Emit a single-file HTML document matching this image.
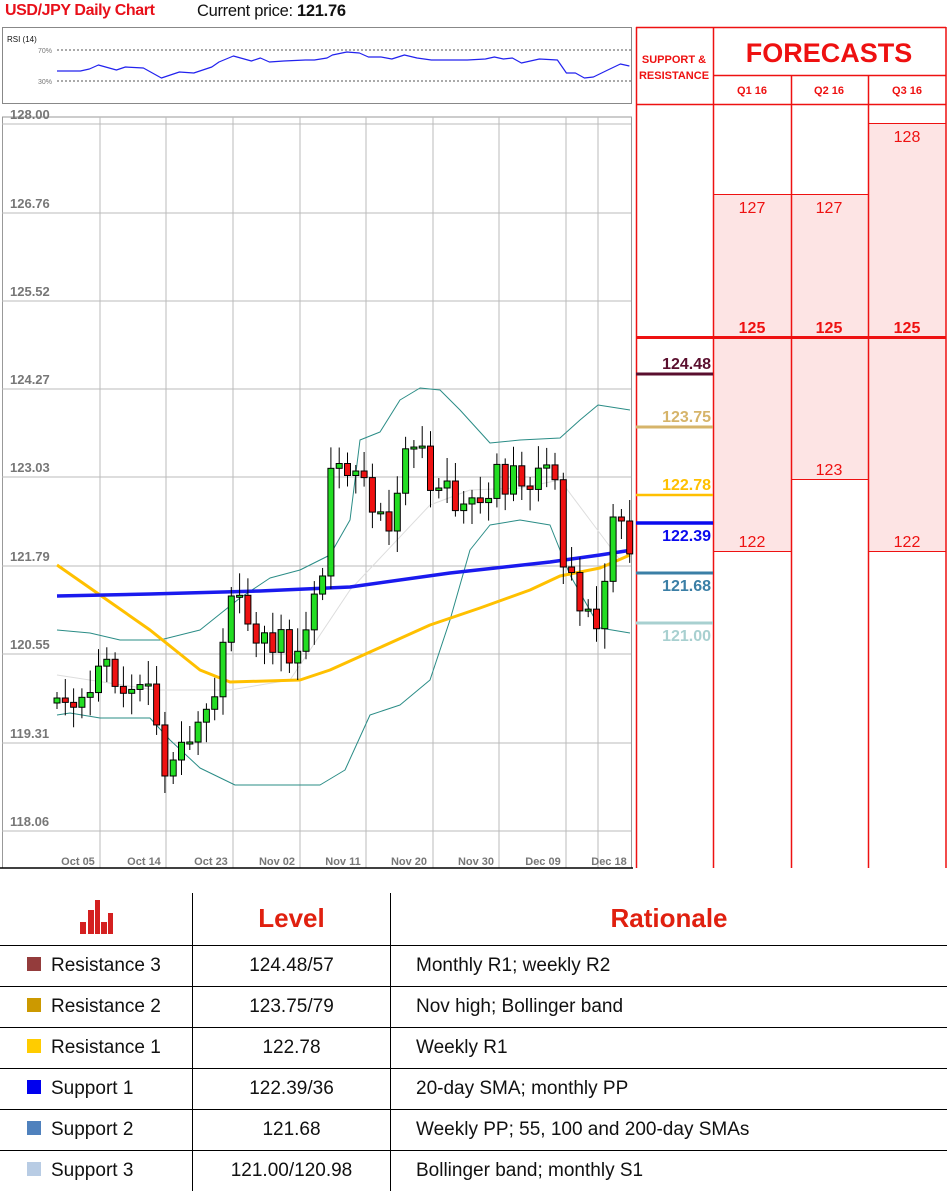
<!DOCTYPE html>
<html><head><meta charset="utf-8"><style>
body{margin:0;width:952px;height:1195px;background:#fff;position:relative;overflow:hidden;font-family:"Liberation Sans",sans-serif}
.t{position:absolute}
td{border:1px solid #000;padding:0;font-size:19px;color:#111}
</style></head><body>
<div class="t" style="left:5px;top:2px;font-size:16px;color:#e8101a;font-weight:bold;letter-spacing:-0.4px">USD/JPY Daily Chart</div>
<div class="t" style="left:197px;top:2px;font-size:16.5px;color:#111;letter-spacing:-0.3px">Current price: <b>121.76</b></div>
<svg id="s" class="t" style="left:0;top:0" width="952" height="875" xmlns="http://www.w3.org/2000/svg"></svg>
<table class="t" style="left:0;top:893px;border-collapse:collapse;width:947px;border-style:hidden">
<tr style="height:52px"><td style="width:192px;text-align:center;border-top:none"><svg width="36" height="36" viewBox="0 0 36 36"><rect x="2" y="24" width="6" height="12" fill="#d42020"/><rect x="10" y="12" width="6" height="24" fill="#d42020"/><rect x="17" y="2" width="5" height="34" fill="#d42020"/><rect x="23" y="24" width="6" height="12" fill="#d42020"/><rect x="30" y="15" width="5" height="21" fill="#d42020"/></svg></td>
<td style="width:197px;text-align:center;font-size:26px;font-weight:bold;color:#e0200f;border-top:none">Level</td>
<td style="text-align:center;font-size:26px;font-weight:bold;color:#e0200f;border-top:none">Rationale</td></tr>
<tr style="height:41px"><td><span style="display:inline-block;width:14px;height:14px;background:#943c3c;margin:0 10px 0 27px"></span>Resistance 3</td><td style="text-align:center">124.48/57</td><td style="padding-left:25px">Monthly R1; weekly R2</td></tr>
<tr style="height:41px"><td><span style="display:inline-block;width:14px;height:14px;background:#cc9900;margin:0 10px 0 27px"></span>Resistance 2</td><td style="text-align:center">123.75/79</td><td style="padding-left:25px">Nov high; Bollinger band</td></tr>
<tr style="height:41px"><td><span style="display:inline-block;width:14px;height:14px;background:#ffcc00;margin:0 10px 0 27px"></span>Resistance 1</td><td style="text-align:center">122.78</td><td style="padding-left:25px">Weekly R1</td></tr>
<tr style="height:41px"><td><span style="display:inline-block;width:14px;height:14px;background:#0000ee;margin:0 10px 0 27px"></span>Support 1</td><td style="text-align:center">122.39/36</td><td style="padding-left:25px">20-day SMA; monthly PP</td></tr>
<tr style="height:41px"><td><span style="display:inline-block;width:14px;height:14px;background:#4f81bd;margin:0 10px 0 27px"></span>Support 2</td><td style="text-align:center">121.68</td><td style="padding-left:25px">Weekly PP; 55, 100 and 200-day SMAs</td></tr>
<tr style="height:41px"><td><span style="display:inline-block;width:14px;height:14px;background:#b8cce4;margin:0 10px 0 27px"></span>Support 3</td><td style="text-align:center">121.00/120.98</td><td style="padding-left:25px">Bollinger band; monthly S1</td></tr>
</table>
<script>
(function(){
var s=document.getElementById('s'),h='';
function L(x1,y1,x2,y2,c,w){h+='<line x1="'+x1+'" y1="'+y1+'" x2="'+x2+'" y2="'+y2+'" stroke="'+c+'" stroke-width="'+w+'"/>';}
function R(x,y,w,hh,f,st,sw){h+='<rect x="'+x+'" y="'+y+'" width="'+w+'" height="'+hh+'" fill="'+f+'"'+(st?' stroke="'+st+'" stroke-width="'+(sw||1)+'"':'')+'/>';}
function T(x,y,t,sz,c,anc,wt){h+='<text x="'+x+'" y="'+y+'" font-size="'+sz+'" fill="'+c+'" text-anchor="'+(anc||'start')+'" font-weight="'+(wt||'normal')+'" font-family="Liberation Sans, sans-serif">'+t+'</text>';}
function P(pts,c,w){h+='<polyline fill="none" stroke="'+c+'" stroke-width="'+w+'" stroke-linejoin="round" points="'+pts.map(function(p){return p.join(',')}).join(' ')+'"/>';}
R(2.5,27.5,629,76,'#fff','#888');
T(7,42,'RSI (14)',8,'#111');
h+='<line x1="57" y1="50" x2="631" y2="50" stroke="#555" stroke-dasharray="2,2"/><line x1="57" y1="81" x2="631" y2="81" stroke="#555" stroke-dasharray="2,2"/>';
T(52,53,'70%',7,'#777','end');T(52,84,'30%',7,'#777','end');
P([[32,71],[45,71],[50,69],[55,65],[65,70],[70,67],[80,68],[90,78],[100,72],[108,73],[118,67],[122,62],[130,56],[140,61],[145,58],[150,62],[158,61],[170,60],[175,60],[182,58],[185,55],[193,52],[200,53],[205,57],[212,57],[218,59],[225,55],[232,58],[240,60],[260,60],[270,59],[275,57],[280,59],[285,58],[290,63],[300,59],[310,60],[315,73],[320,73],[325,78],[330,77],[338,70],[345,64],[350,66]].map(function(p){return [57+(p[0]-32)*1.8,p[1]]}),'#2222ee',1.2);
R(2.5,117,629,751,'#fff','#999');
var gy=[124,213,301,389,477,566,654,743,831];
gy.forEach(function(y){L(2,y,631,y,'#bbb',1)});
[100,166,233,300,366,433,499,566,598].forEach(function(x){L(x,117,x,868,'#bbb',1)});
L(0,868,633,868,'#000',1.5);
var lb=['128.00','126.76','125.52','124.27','123.03','121.79','120.55','119.31','118.06'];
lb.forEach(function(t,i){T(10,gy[i]-5,t,13,'#777','start','bold')});
var dl=['Oct 05','Oct 14','Oct 23','Nov 02','Nov 11','Nov 20','Nov 30','Dec 09','Dec 18'],dx=[78,144,211,277,343,409,476,543,609];
dl.forEach(function(t,i){T(dx[i],865,t,11,'#777','middle','bold')});
P([[57,630],[90,633],[120,640],[160,640],[200,630],[240,598],[270,578],[300,570],[330,555],[350,520],[360,440],[380,432],[400,400],[420,388],[440,390],[460,410],[490,443],[520,440],[560,438],[580,420],[598,405],[630,410]],'#2a8c86',1);
P([[57,715],[70,713],[100,718],[150,718],[170,740],[200,768],[235,785],[270,785],[320,785],[345,770],[370,715],[400,705],[430,680],[450,620],[470,550],[490,525],[520,520],[550,525],[570,575],[600,628],[630,633]],'#2a8c86',1);
P([[57,675],[155,690],[230,690],[290,680],[350,590],[430,505],[470,490],[520,488],[560,480],[590,520],[620,560]],'#ddd',1);
P([[57,565],[100,595],[150,630],[200,670],[230,682],[300,680],[330,670],[370,652],[430,625],[480,608],[530,590],[560,576],[600,568],[630,555]],'#ffc000',3);
P([[57,596],[150,594],[260,591],[350,587],[450,573],[550,562],[600,555],[632,550]],'#1a1aee',3.5);
var cp=[[57,703],[64,703],[71,705],[78,703],[85,700],[92,690],[99,660],[106,660],[113,680],[120,698],[127,678],[134,698],[141,680],[148,688],[155,712],[162,773],[169,773],[176,758],[183,738],[190,738],[197,728],[204,710],[211,705],[218,680],[225,630],[232,590],[239,598],[246,625],[253,625],[260,658],[267,625],[274,658],[281,625],[288,668],[295,658],[302,638],[309,615],[316,590],[323,573],[330,475],[337,462],[344,470],[351,475],[358,475],[365,478],[372,508],[379,510],[386,530],[393,530],[400,462],[407,448],[414,445],[421,442],[428,495],[435,485],[442,485],[449,485],[456,513],[463,500],[470,500],[477,503],[484,500],[491,490],[498,462],[505,493],[512,462],[519,503],[526,463],[533,503],[540,463],[547,465],[554,460],[561,570],[568,570],[575,573],[582,620],[589,610],[596,628],[603,610],[610,518],[617,518],[624,518],[631,567]];
function ci(x){for(var i=1;i<cp.length;i++){if(cp[i][0]>=x){var a=cp[i-1],b=cp[i];return a[1]+(b[1]-a[1])*(x-a[0])/(b[0]-a[0]);}}return cp[cp.length-1][1];}
var prev=703;
for(var i=0;i<70;i++){var x=57+i*8.3;if(x>632)break;var c=ci(x)+((i*37)%11-5);var o=prev;var tp=Math.min(o,c),bt=Math.max(o,c);if(bt-tp<2)bt=tp+2;
L(x,tp-6-(i*13)%18,x,bt+6+(i*7)%16,'#000',1);
R(x-3,tp,6,bt-tp,c<o?'#22dd22':'#ee1111','#000',1);prev=c;}
R(713,104,78,764,'#fff');
R(713,194,78,357,'#fde4e4');R(791,194,77,285,'#fde4e4');R(868,123,78,428,'#fde4e4');
var red='#ee1111';
L(636.5,27,636.5,868,red,1.5);L(946,27,946,868,red,1.5);L(636,27.5,946,27.5,red,1.5);
L(713.5,27,713.5,868,red,1.5);L(791.5,75,791.5,868,red,1.5);L(868.5,75,868.5,868,red,1.5);
L(713,75.5,946,75.5,red,1.5);L(636,104.5,946,104.5,red,1.5);
L(713,194.5,868,194.5,red,1);L(868,123.5,946,123.5,red,1);L(791,479.5,868,479.5,red,1);
L(713,551.5,791,551.5,red,1);L(868,551.5,946,551.5,red,1);
L(636,337.5,946,337.5,red,3);
T(674,63,'SUPPORT &amp;',11,red,'middle','bold');T(674,79,'RESISTANCE',11,red,'middle','bold');
T(829,62,'FORECASTS',27,red,'middle','bold');
T(752,94,'Q1 16',11,red,'middle','bold');T(829,94,'Q2 16',11,red,'middle','bold');T(907,94,'Q3 16',11,red,'middle','bold');
T(752,213,'127',16,red,'middle');T(829,213,'127',16,red,'middle');T(907,142,'128',16,red,'middle');
T(752,333,'125',16,red,'middle','bold');T(829,333,'125',16,red,'middle','bold');T(907,333,'125',16,red,'middle','bold');
T(829,475,'123',16,red,'middle');T(752,547,'122',16,red,'middle');T(907,547,'122',16,red,'middle');
var sr=[[374,'124.48','#5a0f2e',3],[427,'123.75','#d6b46a',3],[495,'122.78','#ffc000',2.5],[523,'122.39','#0a0aee',3.5],[573,'121.68','#3b7fa6',3],[623,'121.00','#a8d0d0',3]];
sr.forEach(function(a,i){L(636,a[0],713,a[0],a[2],a[3]);T(711,i>=3?a[0]+18:a[0]-5,a[1],16,a[2],'end','bold')});
s.innerHTML=h;
})();
</script>
</body></html>
